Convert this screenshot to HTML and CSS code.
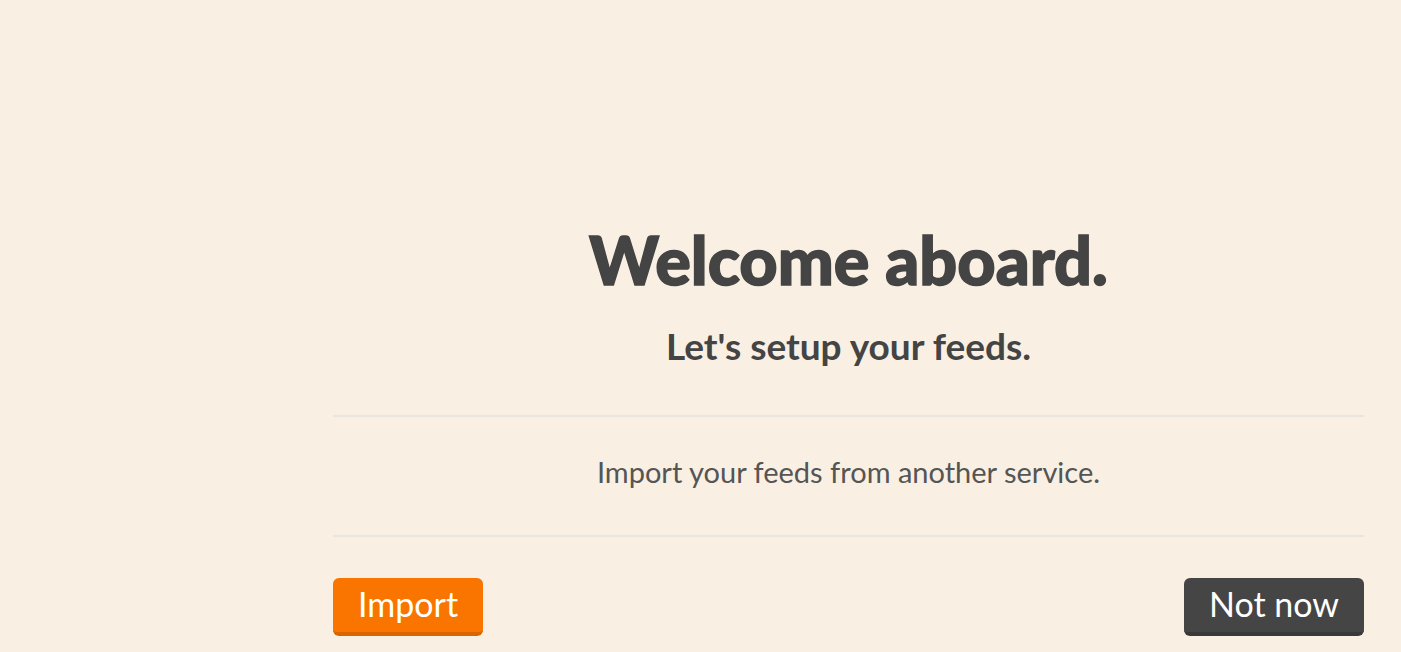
FILE: index.html
```html
<!DOCTYPE html>
<html lang="en">
<head>
    <meta charset="UTF-8">
    <meta name="viewport" content="width=device-width, initial-scale=1.0">
    <title>Welcome aboard</title>
    <link rel="stylesheet" href="styles.css">
</head>
<body>
    <main class="welcome">
        <h1 class="welcome-title">Welcome aboard.</h1>
        <h2 class="welcome-subtitle">Let's setup your feeds.</h2>

        <section class="welcome-step">
            <p>Import your feeds from another service.</p>
        </section>

        <div class="welcome-actions">
            <button class="btn btn-import">Import</button>
            <button class="btn btn-skip">Not now</button>
        </div>
    </main>
</body>
</html>
```

FILE: styles.css
```css
/* Reset */
* {
    margin: 0;
    padding: 0;
    box-sizing: border-box;
}

body {
    font-family: 'Lato', 'Open Sans', sans-serif;
    background-color: #f9f0e3;
    color: #444;
    min-height: 100vh;
}

/* Main column */
.welcome {
    padding: 220px 37px 0 333px;
    text-align: center;
}

.welcome-title {
    font-size: 66.5px;
    font-weight: 900;
    line-height: 1.2;
    color: #444;
    -webkit-text-stroke: 1.5px #444; /* heavier, like Lato Black */
}

.welcome-subtitle {
    font-size: 37px;
    font-weight: 700;
    line-height: 1.2;
    margin-top: 24px;
    color: #444;
}

.welcome-step {
    margin-top: 47px;
    border-top: 2px solid #e8e6e0;
    border-bottom: 2px solid #e8e6e0;
    padding: 38px 0 45px;
}

.welcome-step p {
    font-size: 29px;
    line-height: 1.2;
    color: #555;
}

/* Buttons */
.welcome-actions {
    display: flex;
    justify-content: space-between;
    margin-top: 41px;
}

.btn {
    font-family: inherit;
    font-size: 34px;
    line-height: 1.2;
    color: #fff;
    border: none;
    border-bottom: 4px solid;
    border-radius: 6px;
    padding: 6px 25px 7px;
    cursor: pointer;
}

.btn-import {
    background-color: #f97500; /* orange */
    border-bottom-color: #d96500;
}

.btn-skip {
    background-color: #454545;
    border-bottom-color: #393939;
}
```
